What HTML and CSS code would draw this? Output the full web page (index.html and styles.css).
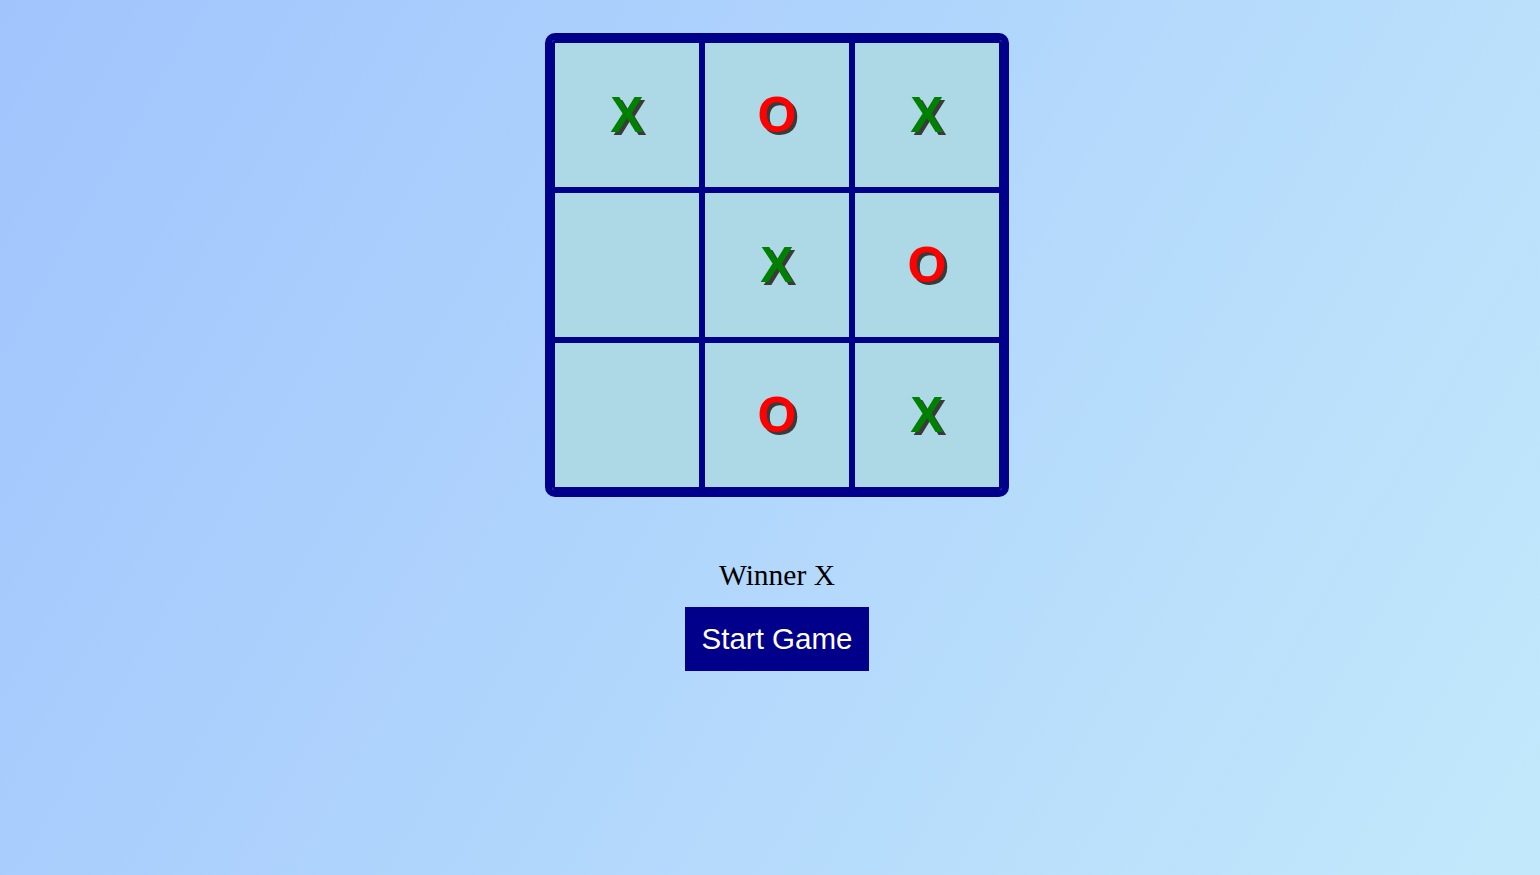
FILE: index.html
```html
<!DOCTYPE html>
<html lang="en">
<head>
<meta charset="utf-8">
<title>Tic Tac Toe</title>
<link rel="stylesheet" href="styles.css">
</head>
<body>
<div class="app">
  <div class="board">
    <div class="cell x">X</div>
    <div class="cell o">O</div>
    <div class="cell x">X</div>
    <div class="cell"></div>
    <div class="cell x">X</div>
    <div class="cell o">O</div>
    <div class="cell"></div>
    <div class="cell o">O</div>
    <div class="cell x">X</div>
  </div>
  <div class="status">Winner X</div>
  <button class="start">Start Game</button>
</div>
</body>
</html>
```

FILE: styles.css
```css
html, body {
  height: 100%;
}
body {
  margin: 0;
  padding: 8px;
  box-sizing: border-box;
  min-height: 100vh;
  background: linear-gradient(120deg, #a1c4fd 0%, #c2e9fb 100%);
  font-family: "Liberation Serif", "Times New Roman", serif;
}
.app {
  display: flex;
  flex-direction: column;
  align-items: center;
  padding-top: 25px;
  padding-left: 14px;
}
.board {
  display: grid;
  grid-template-columns: repeat(3, 150px);
  grid-template-rows: repeat(3, 150px);
  border: 7px solid #00008b;
  border-radius: 10px;
  background: #00008b;
  width: 450px;
  height: 450px;
  overflow: hidden;
}
.cell {
  box-sizing: border-box;
  border: 3px solid #00008b;
  background: #add8e6;
  display: flex;
  align-items: center;
  justify-content: center;
  font-family: "Liberation Sans", Arial, sans-serif;
  font-weight: bold;
  font-size: 50px;
  text-shadow: 3px 3px 0 #3a3a3a;
}
.cell.x { color: #008000; }
.cell.o { color: #ff0000; }
.status {
  margin-top: 62px;
  font-size: 29.5px;
  color: #000;
}
.start {
  margin-top: 15px;
  border: none;
  background: #00008b;
  color: #fff;
  font-family: "Liberation Sans", Arial, sans-serif;
  font-size: 29.5px;
  padding: 15px 16.5px;
  cursor: pointer;
}
```
